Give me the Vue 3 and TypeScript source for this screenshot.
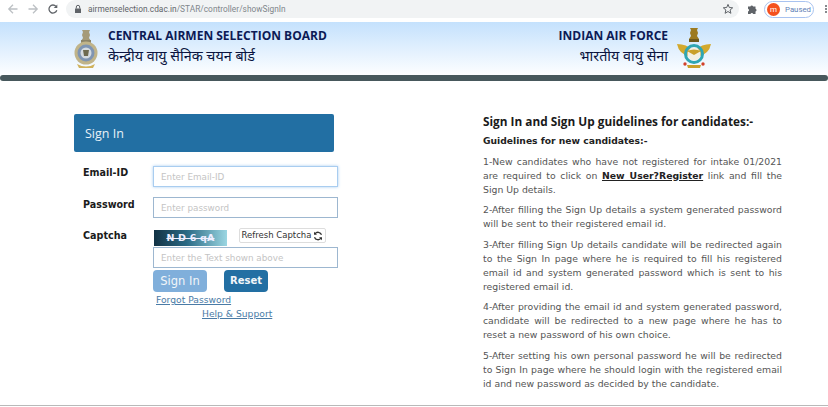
<script setup lang="ts">
const paragraphs: string[] = [
  '2-After filling the Sign Up details a system generated password will be sent to their registered email id.',
  '3-After filling Sign Up details candidate will be redirected again to the Sign In page where he is required to fill his registered email id and system generated password which is sent to his registered email id.',
  '4-After providing the email id and system generated password, candidate will be redirected to a new page where he has to reset a new password of his own choice.',
  '5-After setting his own personal password he will be redirected to Sign In page where he should login with the registered email id and new password as decided by the candidate.'
]
</script>

<template>
  <div class="page">
    <div class="chrome">
      <svg class="nav" width="12" height="12" viewBox="0 0 12 12"><path d="M10.500 6H2M6 1.800 1.800 6 6 10.200" fill="none" stroke="#bcc0c4" stroke-width="1.300"/></svg>
      <svg class="nav step" width="12" height="12" viewBox="0 0 12 12"><path d="M1.500 6H10M6 1.800 10.200 6 6 10.200" fill="none" stroke="#bcc0c4" stroke-width="1.300"/></svg>
      <svg class="nav step" width="12" height="12" viewBox="0 0 12 12"><path d="M9.800 7.200A4 4 0 1 1 9 3.400" fill="none" stroke="#5f6368" stroke-width="1.300"/><path d="M10.300 1.400V5H6.700z" fill="#5f6368"/></svg>
      <div class="omnibox">
        <svg class="lock" width="8" height="10" viewBox="0 0 8 10"><path d="M1 4.500h6v4.500H1z" fill="#5f6368"/><path d="M2.300 4.500V3a1.700 1.700 0 0 1 3.400 0v1.500" fill="none" stroke="#5f6368" stroke-width="1"/></svg>
        <span class="url"><span class="host">airmenselection.cdac.in</span>/STAR/controller/showSignIn</span>
        <svg class="star" width="12" height="12" viewBox="0 0 12 12"><path d="M6 1.400 7.300 4.500l3.400.3-2.600 2.200.8 3.300L6 8.500 3.100 10.300l.8-3.300-2.600-2.200 3.400-.3z" fill="none" stroke="#5f6368" stroke-width="1"/></svg>
      </div>
      <svg class="puzzle" width="12" height="12" viewBox="0 0 12 12"><path d="M1 3.500h2.400a1.400 1.400 0 0 1 2.700 0h2.400v2.300a1.400 1.400 0 0 1 0 2.700V11H6.200a1.400 1.400 0 0 0-2.700 0H1V8.500a1.400 1.400 0 0 0 0-2.700z" fill="#5f6368"/></svg>
      <div class="profile"><span class="avatar">m</span><span class="paused">Paused</span></div>
      <span class="dots"><i></i><i></i><i></i></span>
    </div>

    <header class="banner">
      <div class="brand">
        <svg class="emblem" width="24" height="39" viewBox="0 0 24 39">
          <path d="M8 0h8l-1 2 1 3-1 3 2 3H7l2-3-1-3 1-3z" fill="#a59a78"/>
          <rect x="7" y="10" width="10" height="3" fill="#8c8468"/>
          <circle cx="12" cy="23" r="11.500" fill="#c0b48a"/>
          <circle cx="12" cy="23" r="8.500" fill="#7f95b3"/>
          <circle cx="12" cy="23" r="5.500" fill="#d5dbe0"/>
          <path d="M9 20h6l-1 6h-4z" fill="#6e6a50"/>
          <path d="M3 34q9 5 18 0l-2 4H5z" fill="#d0b25c"/>
        </svg>
        <div class="titles">
          <div class="en">CENTRAL AIRMEN SELECTION BOARD</div>
          <div class="hi">केन्द्रीय वायु सैनिक चयन बोर्ड</div>
        </div>
      </div>
      <div class="brand right">
        <div class="titles end">
          <div class="en">INDIAN AIR FORCE</div>
          <div class="hi">भारतीय वायु सेना</div>
        </div>
        <svg class="emblem e2" width="34" height="41" viewBox="0 0 34 41">
          <path d="M13 0h8l-1 2 1 3-1 3 2 3H12l2-3-1-3 1-3z" fill="#9c7a20"/>
          <rect x="12" y="11" width="10" height="3" fill="#6f5a1c"/>
          <path d="M0 16q10 0 15 6l-3 6q-10-2-12-12zM34 16q-10 0-15 6l3 6q10-2 12-12z" fill="#d3a92d"/>
          <circle cx="17" cy="26" r="8.500" fill="none" stroke="#2fa6b3" stroke-width="3"/>
          <circle cx="17" cy="26" r="6.500" fill="#f2f0e4"/>
          <path d="M10 23q7-3 14 0l-7 4z" fill="#c9a02a"/>
          <circle cx="8" cy="36" r="1.700" fill="#d1402a"/><circle cx="26" cy="36" r="1.700" fill="#d1402a"/>
          <path d="M10 37h14l-1 3H11z" fill="#c9a02a"/>
        </svg>
      </div>
    </header>
    <div class="rule"></div>

    <main class="main">
      <section class="left">
        <div class="panel-head">Sign In</div>
        <form class="form" @submit.prevent>
          <label class="lbl">Email-ID</label>
          <input class="field focus" placeholder="Enter Email-ID" />
          <label class="lbl pw">Password</label>
          <input class="field second" placeholder="Enter password" />
          <label class="lbl cap">Captcha</label>
          <div class="cap-col">
            <div class="cap-row">
              <div class="captcha"><span>N D 6 qA</span></div>
              <button type="button" class="refresh"><span>Refresh Captcha</span>
                <svg width="10" height="10" viewBox="0 0 10 10"><path d="M8.500 3.800A3.700 3.700 0 0 0 2 2.800M1.500 6.200A3.700 3.700 0 0 0 8 7.200" fill="none" stroke="#333" stroke-width="1.300"/><path d="M1 .8v3h3zM9 9.200v-3H6z" fill="#333"/></svg>
              </button>
            </div>
            <input class="field" placeholder="Enter the Text shown above" />
            <div class="btn-row">
              <button type="button" class="btn dim">Sign In</button>
              <button type="button" class="btn">Reset</button>
            </div>
            <a class="link forgot">Forgot Password</a>
            <a class="link help">Help &amp; Support</a>
          </div>
        </form>
      </section>
      <section class="guide">
        <h1>Sign In and Sign Up guidelines for candidates:-</h1>
        <h2>Guidelines for new candidates:-</h2>
        <p>1-New candidates who have not registered for intake 01/2021 are required to click on <a>New User?Register</a> link and fill the Sign Up details.</p>
        <p v-for="t in paragraphs" :key="t">{{ t }}</p>
      </section>
    </main>
    <div class="foot"></div>
  </div>
</template>

<style>
html, body { margin: 0; background: #fff; overflow: hidden; }
</style>

<style scoped>
.page { width: 828px; height: 407px; overflow: hidden; display: flex; flex-direction: column; font-family: "DejaVu Sans", Verdana, sans-serif; background: #fff; }
.chrome { height: 20px; padding: 0 0 2px 7px; margin-bottom: 2px; display: flex; align-items: center; box-sizing: border-box; flex: none; }
.nav { flex: none; }
.step { margin-left: 8px; }
.omnibox { margin-left: 7px; width: 673px; flex: none; height: 18px; background: #f1f3f4; border-radius: 9px; display: flex; align-items: center; padding: 0 5px 0 8px; box-sizing: border-box; }
.lock { flex: none; margin-right: 6px; }
.url { font: 8.300px "Roboto", sans-serif; color: #80868b; flex: 1; letter-spacing: .03px; }
.host { color: #5f6368; }
.puzzle { margin-left: 8px; flex: none; }
.profile { margin-left: 5px; width: 50px; height: 17px; border: 1px solid #a9c3f0; border-radius: 9px; box-sizing: border-box; display: flex; align-items: center; padding-left: 2px; flex: none; }
.avatar { width: 13px; height: 13px; border-radius: 50%; background: #f4511e; color: #fff; font: 8px/13px "Roboto", sans-serif; text-align: center; flex: none; }
.paused { font: 7.800px "Roboto", sans-serif; color: #5f7fb5; margin-left: 5px; }
.dots { margin-left: 11px; display: flex; flex-direction: column; gap: 1px; flex: none; }
.dots i { width: 2px; height: 2px; border-radius: 50%; background: #5f6368; }

.banner { height: 53px; flex: none; box-sizing: border-box; background: linear-gradient(#c4e1fd, #fdfeff); display: flex; justify-content: space-between; padding: 6px 117px 0 74px; }
.brand { display: flex; gap: 10px; align-items: flex-start; }
.brand.right { gap: 9px; }
.emblem { flex: none; margin-top: 2px; }
.emblem.e2 { margin-top: 0; }
.end { text-align: right; }
.en { font: 700 12px/16px "Open Sans", sans-serif; color: #0c1a55; }
.hi { font: 400 14.300px/24px "Noto Sans", "Open Sans", sans-serif; color: #0a1440; }
.rule { height: 6px; flex: none; background: #47585c; border-radius: 3px; }

.main { flex: 1; display: flex; align-items: flex-start; min-height: 0; }
.left { width: 260px; margin: 33px 0 0 74px; flex: none; }
.panel-head { height: 38px; box-sizing: border-box; background: #226fa3; border-radius: 2px; color: #e8f1f7; font: 400 12.500px/36px "Open Sans", sans-serif; padding: 2px 0 0 11px; }
.form { display: grid; grid-template-columns: 79px 185px; margin-top: 14px; width: 264px; }
.lbl { font: 700 9.600px/14px "DejaVu Sans", sans-serif; color: #1b1b1b; padding-left: 9px; }
.lbl.pw { margin-top: 11px; }
.lbl.cap { margin-top: 11px; }
.field { width: 185px; height: 21px; box-sizing: border-box; border: 1px solid #9db7d0; padding: 0 7px; font: 8.800px "DejaVu Sans", sans-serif; background: #fff; outline: none; }
.field::placeholder { color: #c4c4c4; }
.field.focus { border-color: #a9cdf0; box-shadow: 0 0 3px #a9cdf0; }
.field.second { margin-top: 10px; }
.cap-col { display: flex; flex-direction: column; align-items: flex-start; margin-top: 10px; }
.cap-row { display: flex; align-items: flex-start; height: 19px; }
.captcha { width: 73px; height: 16px; margin: 2px 0 0 1px; background: linear-gradient(90deg, #123244, #2a6a85 45%, #9ad6e2); color: #eef; font: 700 9.500px/16px "DejaVu Sans", sans-serif; letter-spacing: .2px; text-align: center; overflow: hidden; text-decoration: line-through; }
.refresh { margin-left: 12px; width: 87px; height: 15px; padding: 0; border: 1px solid #ddd; border-radius: 2px; background: #fff; color: #333; font: 8.500px/13px "DejaVu Sans", sans-serif; display: flex; align-items: center; justify-content: center; gap: 2px; white-space: nowrap; }
.refresh svg { flex: none; }
.btn-row { display: flex; gap: 17px; margin-top: 2px; }
.btn { height: 22px; padding: 0; border: 0; border-radius: 4px; background: #226fa3; color: #f2f6f9; font: 400 11.500px/22px "DejaVu Sans", sans-serif; white-space: nowrap; }
.btn.dim { background: #80afdb; width: 54px; }
.btn:not(.dim) { width: 44px; font-weight: 700; font-size: 10px; }
.link { font: 9.200px/14px "DejaVu Sans", sans-serif; color: #4a7ba6; text-decoration: underline; }
.forgot { margin: 1px 0 0 3px; }
.help { margin-left: 49px; }

.guide { width: 299px; margin: 32px 0 0 149px; flex: none; color: #555; font-size: 9.300px; line-height: 14px; }
.guide h1 { margin: 0; font: 700 11.800px/17px "Open Sans", sans-serif; color: #1a1a1a; }
.guide h2 { margin: 4px 0 0; font: 700 9.200px/14px "DejaVu Sans", sans-serif; color: #222; }
.guide p { margin: 6.500px 0 0; text-align: justify; }
.guide a { font-weight: 700; color: #222; text-decoration: underline; }
.foot { height: 1px; background: #b9b9b9; margin-bottom: 1px; flex: none; }
</style>
